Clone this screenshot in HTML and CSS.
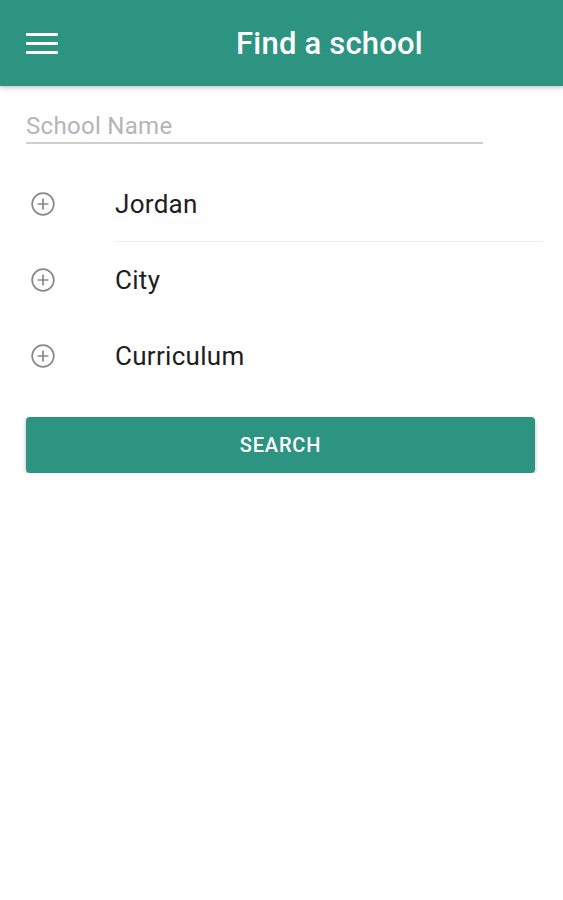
FILE: index.html
```html
<!DOCTYPE html>
<html lang="en">
  <head>
    <meta charset="UTF-8" />
    <meta name="viewport" content="width=device-width, initial-scale=1" />
    <title>Find a school</title>
    <link rel="stylesheet" href="styles.css">
  </head>
  <body>
    <header class="app-bar">
      <button class="menu-btn" aria-label="Menu">
        <span></span><span></span><span></span>
      </button>
      <h1 class="app-title">Find a school</h1>
    </header>

    <main class="content">
      <div class="field">
        <input type="text" class="field-input" placeholder="School Name" />
      </div>

      <ul class="filters">
        <li class="filter">
          <svg class="filter-icon" viewBox="0 0 24 24" width="24" height="24">
            <circle cx="12" cy="12" r="10" fill="none" stroke="#8a8a8a" stroke-width="1.6" />
            <path d="M12 7v10M7 12h10" stroke="#8a8a8a" stroke-width="1.6" />
          </svg>
          <span class="filter-label">Jordan</span>
        </li>
        <li class="filter">
          <svg class="filter-icon" viewBox="0 0 24 24" width="24" height="24">
            <circle cx="12" cy="12" r="10" fill="none" stroke="#8a8a8a" stroke-width="1.6" />
            <path d="M12 7v10M7 12h10" stroke="#8a8a8a" stroke-width="1.6" />
          </svg>
          <span class="filter-label">City</span>
        </li>
        <li class="filter">
          <svg class="filter-icon" viewBox="0 0 24 24" width="24" height="24">
            <circle cx="12" cy="12" r="10" fill="none" stroke="#8a8a8a" stroke-width="1.6" />
            <path d="M12 7v10M7 12h10" stroke="#8a8a8a" stroke-width="1.6" />
          </svg>
          <span class="filter-label">Curriculum</span>
        </li>
      </ul>

      <button class="search-btn">SEARCH</button>
    </main>
  </body>
</html>
```

FILE: styles.css
```css
body {
  font-family: Roboto, "Noto Sans", Arial, sans-serif;
  background: #fff;
  color: #222;
  margin: 0;
  padding: 0;
}
.app-bar {
  display: flex;
  align-items: center;
  height: 86px;
  background: #2e9482;
  box-shadow: 0 2px 4px rgba(0, 0, 0, 0.22);
}
.menu-btn {
  width: 96px;
  height: 86px;
  padding: 0 0 0 26px;
  border: 0;
  background: none;
  display: flex;
  flex-direction: column;
  justify-content: center;
  gap: 6px;
}
.menu-btn span {
  display: block;
  width: 32px;
  height: 3px;
  background: #fff;
  border-radius: 1px;
}
.app-title {
  flex: 1;
  margin: 0;
  text-align: center;
  color: #fff;
  font-size: 31px;
  font-weight: 500;
  letter-spacing: 0.2px;
}
.content {
  padding: 22px 20px 0 26px;
}
.field {
  width: 457px;
}
.field-input {
  width: 100%;
  box-sizing: border-box;
  border: 0;
  border-bottom: 2px solid #cfcfcf;
  padding: 4px 0 2px 0;
  font-family: inherit;
  font-size: 24px;
  letter-spacing: 0.3px;
  color: #222;
  outline: none;
  background: none;
}
.field-input::placeholder {
  color: #b5b5b5;
}
.filters {
  list-style: none;
  margin: 22px 0 0 0;
  padding: 0;
}
.filter {
  display: flex;
  align-items: center;
  height: 76px;
}
.filter:first-child .filter-label {
  border-bottom: 1px solid #ececec;
}
.filter-icon {
  width: 26px;
  height: 26px;
  margin: 0 59px 0 4px;
  flex-shrink: 0;
}
.filter-label {
  flex: 1;
  align-self: stretch;
  display: flex;
  align-items: center;
  font-size: 26px;
  letter-spacing: 0.3px;
  color: #1e1e1e;
}
.search-btn {
  display: block;
  width: 509px;
  height: 56px;
  margin-top: 23px;
  border: 0;
  border-radius: 4px;
  background: #2e9482;
  color: #fff;
  font-family: inherit;
  font-size: 20px;
  font-weight: 500;
  letter-spacing: 0.8px;
  box-shadow: 0 2px 4px rgba(0, 0, 0, 0.28);
}
```
